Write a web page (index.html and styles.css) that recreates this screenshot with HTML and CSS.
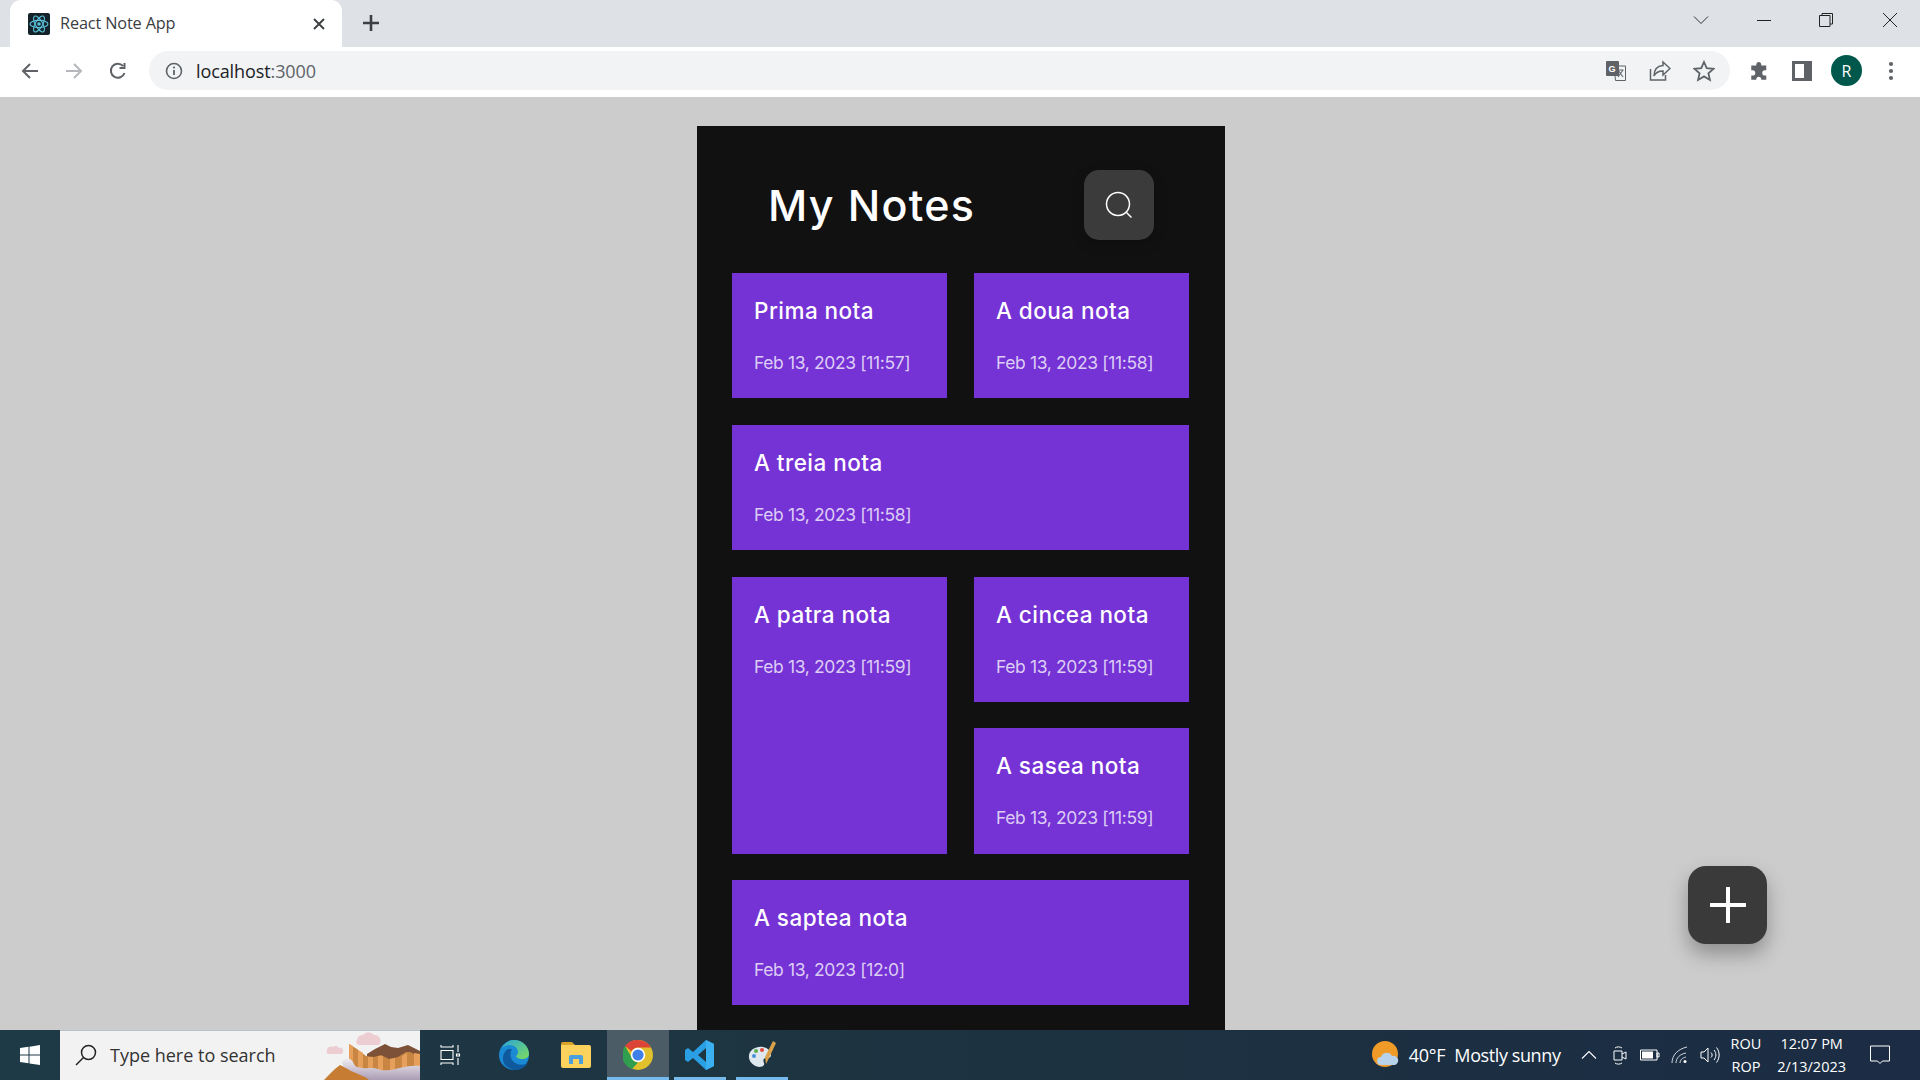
FILE: index.html
```html
<!DOCTYPE html>
<html lang="en">
<head>
<meta charset="utf-8">
<title>React Note App</title>
<link rel="stylesheet" href="styles.css">
</head>
<body>
<div class="window">
  <div class="tabstrip">
    <div class="tab">
      <svg class="favicon" viewBox="0 0 22 22"><rect width="22" height="22" rx="2" fill="#14232b"/><g fill="none" stroke="#5cc3dc" stroke-width="1.1"><ellipse cx="11" cy="11" rx="9" ry="3.6"/><ellipse cx="11" cy="11" rx="9" ry="3.6" transform="rotate(60 11 11)"/><ellipse cx="11" cy="11" rx="9" ry="3.6" transform="rotate(120 11 11)"/></g><circle cx="11" cy="11" r="1.8" fill="#5cc3dc"/></svg>
      <span class="tab-title">React Note App</span>
      <svg class="tab-close" viewBox="0 0 12 12"><path d="M1 1l10 10M11 1L1 11" stroke="#3c4043" stroke-width="1.9" fill="none"/></svg>
    </div>
    <svg class="new-tab" viewBox="0 0 18 18"><path d="M9 1v16M1 9h16" stroke="#3c4043" stroke-width="2.6" fill="none"/></svg>
    <div class="win-controls">
      <svg class="wc wc-chev" viewBox="0 0 16 16"><path d="M1 4.500l7 7 7-7" stroke="#333" stroke-width="1" fill="none"/></svg>
      <svg class="wc" viewBox="0 0 16 16"><path d="M1 8.500h14" stroke="#222" stroke-width="1" fill="none"/></svg>
      <svg class="wc wc-restore" viewBox="0 0 16 16"><path d="M1.500 3.500h10.500v11h-10.500zM4 3.500v-2h10.500v10.500h-2.500" stroke="#222" stroke-width="1" fill="none"/></svg>
      <svg class="wc" viewBox="0 0 16 16"><path d="M1 1l14 14M15 1L1 15" stroke="#222" stroke-width="1" fill="none"/></svg>
    </div>
  </div>
  <div class="toolbar">
    <svg class="tb-icon" viewBox="0 0 20 20"><path d="M18 10H3M10 3l-7 7 7 7" stroke="#5f6368" stroke-width="2" fill="none"/></svg>
    <svg class="tb-icon" viewBox="0 0 20 20"><path d="M2 10h15M10 3l7 7-7 7" stroke="#b4b7bb" stroke-width="2" fill="none"/></svg>
    <svg class="tb-icon" viewBox="0 0 20 20"><path d="M16.500 12a7 7 0 1 1-1.500-7M16.500 2v5h-5" stroke="#5f6368" stroke-width="2" fill="none"/></svg>
    <div class="omnibox">
      <svg class="info" viewBox="0 0 18 18"><circle cx="9" cy="9" r="7.500" stroke="#5f6368" stroke-width="1.600" fill="none"/><path d="M9 8v5" stroke="#5f6368" stroke-width="1.800"/><circle cx="9" cy="5.500" r="1.100" fill="#5f6368"/></svg>
      <span class="url">localhost<span class="url-port">:3000</span></span>
      <div class="omni-actions">
        <svg class="omni-icon" viewBox="0 0 22 22"><path d="M9 6h11.500v14.500h-10z" fill="#f1f3f4" stroke="#5f6368" stroke-width="1"/><rect x="1" y="1" width="13" height="15" rx="1" fill="#5f6368"/><text x="3.500" y="12" class="g-glyph">G</text><path d="M13 10l5 7M18 10l-5 7M12.500 10h6" stroke="#5f6368" stroke-width="1.100"/></svg>
        <svg class="omni-icon" viewBox="0 0 22 22"><path d="M1.500 9v11h15v-5" stroke="#5f6368" stroke-width="1.500" fill="none"/><path d="M14 2l7 6.500-7 6.500v-4c-4 0-7 1-9 5 0-6 3-10 9-10.500z" stroke="#5f6368" stroke-width="1.500" fill="none"/></svg>
        <svg class="omni-icon" viewBox="0 0 22 22"><path d="M11 2l2.700 6.200 6.800.6-5.100 4.500 1.500 6.600L11 16.400l-5.900 3.500 1.500-6.600L1.500 8.800l6.800-.6z" stroke="#5f6368" stroke-width="1.800" fill="none"/></svg>
      </div>
    </div>
    <div class="tb-right">
      <svg class="tb-icon" viewBox="0 0 22 22"><path d="M8 3.500a2.800 2.800 0 0 1 5.500 0V5H19v5.200h-1.500a2.900 2.900 0 0 0 0 5.800H19v4.500h-5.500v-1a2.800 2.800 0 0 0-5.500 0v1H2.500V16H4a2.900 2.900 0 0 0 0-5.800H2.500V5H8z" fill="#5f6368"/></svg>
      <svg class="tb-icon" viewBox="0 0 20 20"><path d="M0 0h20v20H0zM3 3v14h9V3z" fill="#5f6368" fill-rule="evenodd"/></svg>
      <div class="avatar">R</div>
      <svg class="tb-icon" viewBox="0 0 20 20"><circle cx="10" cy="3" r="2.100" fill="#5f6368"/><circle cx="10" cy="10" r="2.100" fill="#5f6368"/><circle cx="10" cy="17" r="2.100" fill="#5f6368"/></svg>
    </div>
  </div>
  <main class="viewport">
    <section class="app">
      <header class="app-header">
        <h1 class="app-title">My Notes</h1>
        <button class="search-btn" type="button">
          <svg viewBox="0 0 30 30" class="search-icon"><circle cx="14" cy="14" r="11.500" stroke="#fff" stroke-width="1.500" fill="none"/><path d="M22.500 22.500l5 5" stroke="#fff" stroke-width="1.500"/></svg>
        </button>
      </header>
      <div class="notes">
        <article class="note"><h2>Prima nota</h2><p>Feb 13, 2023 [11:57]</p></article>
        <article class="note"><h2>A doua nota</h2><p>Feb 13, 2023 [11:58]</p></article>
        <article class="note note-wide"><h2>A treia nota</h2><p>Feb 13, 2023 [11:58]</p></article>
        <article class="note note-tall"><h2>A patra nota</h2><p>Feb 13, 2023 [11:59]</p></article>
        <article class="note"><h2>A cincea nota</h2><p>Feb 13, 2023 [11:59]</p></article>
        <article class="note"><h2>A sasea nota</h2><p>Feb 13, 2023 [11:59]</p></article>
        <article class="note note-wide"><h2>A saptea nota</h2><p>Feb 13, 2023 [12:0]</p></article>
      </div>
    </section>
    <button class="fab" type="button">
      <svg viewBox="0 0 36 36" class="fab-icon"><path d="M18 1v34M1 18h34" stroke="#fff" stroke-width="4" stroke-linecap="round" fill="none"/></svg>
    </button>
  </main>
  <footer class="taskbar">
    <div class="start">
      <svg viewBox="0 0 20 20" class="start-icon"><path d="M0 3l8.500-1.200V9.500H0zM9.500 1.700L20 0v9.500H9.500zM0 10.500h8.500v7.700L0 17zM9.500 10.500H20V20L9.500 18.400z" fill="#fff"/></svg>
    </div>
    <div class="searchbox">
      <svg viewBox="0 0 22 22" class="sb-icon"><circle cx="13.500" cy="8.500" r="7" stroke="#222" stroke-width="1.500" fill="none"/><path d="M8.500 13.500L1 21" stroke="#222" stroke-width="1.500"/></svg>
      <span class="sb-text">Type here to search</span>
      <svg viewBox="0 0 100 50" class="sb-art">
        <defs><linearGradient id="lil" x1="0" y1="0" x2="0" y2="1"><stop offset="0" stop-color="#f2eef2"/><stop offset="1" stop-color="#a99cb4"/></linearGradient></defs>
        <path d="M37 10a6 6 0 0 1 6-5 7 7 0 0 1 11 0 6 6 0 0 1 5 10H39a3 3 0 0 1-2-5z" fill="#eccdd2"/>
        <path d="M7 20a4 4 0 0 1 6-3 4 4 0 0 1 6 1 3 3 0 0 1 2 6H8a3 3 0 0 1-1-4z" fill="#eccdd2"/>
        <path d="M47 24l8-5 10-5 6 3 7 1 10-3 12 6v10H47z" fill="#7d5138"/>
        <path d="M29 14l8 5 9 7 8 1 7-2 8 4 9-2 8-5 4 0 8 4v21H29z" fill="#c98643"/>
        <path d="M29 14l4 2v22h-4zM38 20l5 3v15h-5zM48 27l5 0v13h-5zM58 26l5 0v15h-5zM70 29l5 -1v12h-5zM82 26l5 -3v15h-5zM94 23l6 1v12h-6z" fill="#e7a05b"/>
        <path d="M22 32c2-4 7-5 9-2 3 2 3 6 6 7 12 3 12-1 24 3 12 2 24-6 39-4v14H38c-5-6-16-12-16-18z" fill="url(#lil)"/>
        <path d="M4 50c5-5 9-10 16-15 4 2 6 3 11 6 6 3 14 5 18 9z" fill="#c67c33"/>
      </svg>
    </div>
    <div class="tasks">
      <div class="task">
        <svg viewBox="0 0 22 22" class="task-icon task-view"><path d="M2 1v2h12V1M2 6.500h12v9H2zM2 21v-2h12v2M19 1v7M17.500 10h3v2h-3zM19 14v7" stroke="#fff" stroke-width="1.100" fill="none"/></svg>
      </div>
      <div class="task">
        <svg viewBox="0 0 30 30" class="task-icon-lg"><defs><linearGradient id="e1" x1="0" y1="0" x2="1" y2="1"><stop offset="0" stop-color="#2aa6d8"/><stop offset="1" stop-color="#7edb5a"/></linearGradient></defs><circle cx="15" cy="15" r="15" fill="#1a8ad4"/><path d="M9 9c-5 3-7 10-3 16 3 3 7 5 11 5 5 0 9-3 12-7-5 3-13 2-16-3-2-3-2-8 0-11z" fill="#0f5a9e"/><path d="M3 8C6 2 11 0 15 0c8 0 15 6 15 14 0 3-3 5-7 5-3 0-6-1-6-3 1-1 2-2 2-4 0-4-4-7-8-7-3 0-6 1-8 3z" fill="url(#e1)"/></svg>
      </div>
      <div class="task">
        <svg viewBox="0 0 30 26" class="task-icon-lg"><path d="M0 2a2 2 0 0 1 2-2h9l3 3h-14z" fill="#d9a42a"/><path d="M0 3h28a2 2 0 0 1 2 2v19a2 2 0 0 1-2 2H2a2 2 0 0 1-2-2z" fill="#fbd35c"/><path d="M8 22v-7a2 2 0 0 1 2-2h10a2 2 0 0 1 2 2v7h-4v-5h-6v5z" fill="#4a9fdc"/></svg>
      </div>
      <div class="task task-active task-open">
        <svg viewBox="0 0 30 30" class="task-icon-xl"><circle cx="15" cy="15" r="15" fill="#e0c12c"/><path d="M15 0a15 15 0 0 1 13 7.500H15a7.500 7.500 0 0 0-6.500 3.750L2 6A15 15 0 0 1 15 0z" fill="#db4437"/><path d="M2 6l6.500 11.250A7.500 7.500 0 0 0 15 22.500L9 29A15 15 0 0 1 2 6z" fill="#2f9e4f"/><circle cx="15" cy="15" r="7.200" fill="#fff"/><circle cx="15" cy="15" r="5.600" fill="#3f7fe8"/></svg>
      </div>
      <div class="task task-open">
        <svg viewBox="0 0 30 30" class="task-icon-lg"><path d="M21 0l8 4v22l-8 4-13-12-5 4-3-2v-10l3-2 5 4zM21 8l-8 7 8 7z" fill="#2a9fe4" fill-rule="evenodd"/><path d="M21 0l8 4v22l-8 4z" fill="#3bb0f0"/></svg>
      </div>
      <div class="task task-open">
        <svg viewBox="0 0 30 30" class="task-icon-lg"><path d="M2 18C1 10 9 6 16 7c5 1 8 4 8 8 0 3-3 3-5 3-3 0-3 3-2 5 1 3-2 4-5 4-5-1-9-4-10-9z" fill="#dfe8ee"/><circle cx="7" cy="16" r="2" fill="#4a90d9"/><circle cx="9" cy="11" r="2" fill="#5bb04c"/><circle cx="15" cy="10" r="2" fill="#e04a3c"/><path d="M26 1l3 2-7 15-3 6-1-7z" fill="#d9a24a"/></svg>
      </div>
    </div>
    <div class="tray">
      <svg viewBox="0 0 28 28" class="weather"><circle cx="13" cy="13" r="13" fill="#f09a27"/><path d="M9 24a4 4 0 0 1 0-8 6 6 0 0 1 11-1 4.500 4.500 0 0 1 3 9z" fill="#b9d2ec"/></svg>
      <span class="weather-text">40°F</span>
      <span class="weather-text weather-desc">Mostly sunny</span>
      <svg viewBox="0 0 16 10" class="ti ti-chev"><path d="M1 8.500l7-7 7 7" stroke="#fff" stroke-width="1.100" fill="none"/></svg>
      <svg viewBox="0 0 16 20" class="ti ti-meet"><path d="M2 6h8v9H2zM10 9l4-2v7l-4-2M3 3c2-1.500 5-1.500 7 0M3 18c2 1.500 5 1.500 7 0" stroke="#fff" stroke-width="1" fill="none"/></svg>
      <svg viewBox="0 0 20 12" class="ti ti-batt"><path d="M.5 1h16.500v10H.5zM17 4h2v4h-2z" stroke="#fff" stroke-width="1" fill="none"/><rect x="2" y="2.500" width="11" height="7" fill="#fff"/></svg>
      <svg viewBox="0 0 18 18" class="ti ti-wifi"><path d="M1 17C1 9 7 3 16 1M5 17c0-5 4-9 10-10M9 17c0-3 2-5 6-6" stroke="#cfd6dd" stroke-width="1" fill="none"/><circle cx="14" cy="15.500" r="1.500" fill="#fff"/></svg>
      <svg viewBox="0 0 20 18" class="ti ti-sound"><path d="M1 6h3l4-4v14l-4-4H1zM11 6.500c1.500 1.500 1.500 3.500 0 5M14 4c2.500 3 2.500 7 0 10M16.500 1.500c3.500 4.500 3.500 10.500 0 15" stroke="#fff" stroke-width="1" fill="none"/></svg>
      <div class="lang"><span>ROU</span><span>ROP</span></div>
      <div class="clock"><span>12:07 PM</span><span>2/13/2023</span></div>
      <svg viewBox="0 0 20 20" class="ti ti-notif"><path d="M.5 1h19v15h-7l-2.500 2.500L7.500 16h-7z" stroke="#fff" stroke-width="1" fill="none"/></svg>
    </div>
  </footer>
</div>
</body>
</html>
```

FILE: styles.css
```css
* { box-sizing: border-box; }
html, body { margin: 0; height: 100%; overflow: hidden; }
body { font-family: "Open Sans", "Liberation Sans", sans-serif; background: #ccc; }
.window { width: 1920px; height: 1080px; display: flex; flex-direction: column; }

.tabstrip { height: 47px; background: #dee1e6; display: flex; align-items: flex-start; padding-left: 10px; flex: none; }
.tab { width: 332px; height: 47px; background: #fff; border-radius: 11px 11px 0 0; display: flex; align-items: center; padding: 0 16px 0 18px; }
.favicon { width: 22px; height: 22px; flex: none; }
.tab-title { font-size: 16.3px; color: #3c4043; margin-left: 10px; flex: 1; letter-spacing: -0.15px; padding-bottom: 2px; }
.tab-close { width: 12px; height: 12px; margin-right: 1px; }
.new-tab { width: 18px; height: 18px; margin: 14px 0 0 20px; }
.win-controls { margin-left: auto; display: flex; align-items: center; height: 40px; padding-right: 22px; gap: 47px; }
.wc { width: 16px; height: 16px; }
.wc-restore { margin-left: -1px; margin-right: 1px; }

.toolbar { height: 50px; background: #fff; display: flex; align-items: center; padding: 0 0 3px 20px; flex: none; gap: 24px; }
.tb-icon { width: 20px; height: 20px; flex: none; }
.omnibox { width: 1581px; height: 39px; margin-left: -3px; background: #f1f3f4; border-radius: 20px; display: flex; align-items: center; padding: 0 15px 0 16px; flex: none; }
.info { width: 18px; height: 18px; }
.url { font-size: 18px; color: #202124; margin-left: 13px; letter-spacing: -0.1px; }
.url-port { color: #5f6368; }
.omni-actions { margin-left: auto; display: flex; gap: 22px; }
.omni-icon { width: 22px; height: 22px; }
.g-glyph { font-family: "Liberation Sans", sans-serif; font-size: 9px; font-weight: 700; fill: #fff; }
.tb-right { display: flex; align-items: center; margin-left: -5px; gap: 23px; }
.avatar { width: 31px; height: 31px; border-radius: 50%; background: #00574b; color: #fff; font-size: 16px; display: flex; align-items: center; justify-content: center; margin: 0 -4px; }

.viewport { flex: 1; min-height: 0; position: relative; overflow: hidden; display: flex; justify-content: center; background: #ccc; padding-left: 2px; }
.app { width: 528px; margin-top: 29px; background: #111; padding: 44px 36px 40px 35px; height: 930px; flex: none; font-family: Inter, "Liberation Sans", sans-serif; }
.app-header { display: flex; align-items: center; justify-content: space-between; padding: 0 35px 0 36px; margin-bottom: 33px; }
.app-title { margin: 0; color: #fff; font-size: 43px; font-weight: 500; letter-spacing: 1.3px; }
.search-btn { width: 70px; height: 70px; border: 0; border-radius: 15px; background: #3b3b3b; display: flex; align-items: center; justify-content: center; padding: 0; box-shadow: 0 4px 14px rgba(0,0,0,.2); }
.search-icon { width: 30px; height: 30px; }
.notes { display: grid; grid-template-columns: 215px 215px; grid-auto-rows: 125.25px; column-gap: 27px; row-gap: 26.5px; }
.note { background: #7532d4; padding: 24px 22px; color: #fff; }
.note-wide { grid-column: span 2; }
.note-tall { grid-row: span 2; }
.note h2 { margin: 0; font-size: 22.5px; font-weight: 500; line-height: 28px; letter-spacing: 0.45px; }
.note p { margin: 26px 0 0; font-size: 17.5px; font-weight: 400; line-height: 24px; color: #dccdf5; letter-spacing: -0.37px; }
.fab { position: absolute; right: 153px; bottom: 86px; width: 79px; height: 78px; border: 0; padding: 0; border-radius: 18px; background: #3a3a3a; display: flex; align-items: center; justify-content: center; box-shadow: 0 10px 20px rgba(0,0,0,.3); }
.fab-icon { width: 36px; height: 36px; }

.taskbar { height: 50px; flex: none; display: flex; align-items: stretch; background: linear-gradient(90deg, #1f3a47 0%, #1d3340 45%, #1b2c44 100%); color: #fff; position: relative; z-index: 2; }
.start { width: 60px; display: flex; align-items: center; justify-content: center; }
.start-icon { width: 20px; height: 20px; }
.searchbox { width: 360px; background: #f2f2f2; display: flex; align-items: center; padding: 0 0 2px 15px; border-top: 1px solid #b9c2c8; position: relative; overflow: hidden; }
.sb-icon { width: 22px; height: 22px; }
.sb-text { color: #333; font-size: 18px; margin-left: 13px; }
.sb-art { position: absolute; right: 0; bottom: 0; width: 100px; height: 50px; }
.tasks { display: flex; margin-left: 1px; }
.task { width: 62px; display: flex; align-items: center; justify-content: center; position: relative; }
.task-open::after { content: ""; position: absolute; left: 5px; right: 5px; bottom: 0; height: 3px; background: #76b9ed; }
.task-active { background-color: #4b5c66; }
.task-active::after { left: 0; right: 0; }
.task-icon { width: 22px; height: 22px; }
.task-view { margin-right: 5px; }
.task-icon-lg { width: 30px; height: 30px; }
.task-icon-xl { width: 30px; height: 30px; }
.tray { margin-left: auto; display: flex; align-items: center; padding-right: 30px; }
.weather { width: 28px; height: 28px; margin-right: 9px; }
.weather-text { font-size: 18px; color: #fff; letter-spacing: -0.25px; }
.weather-desc { margin-left: 9px; letter-spacing: -0.4px; }
.ti { flex: none; }
.ti-chev { width: 16px; height: 10px; margin-left: 20px; }
.ti-meet { width: 16px; height: 20px; margin-left: 15px; }
.ti-batt { width: 20px; height: 12px; margin-left: 12px; }
.ti-wifi { width: 18px; height: 18px; margin-left: 11px; }
.ti-sound { width: 20px; height: 18px; margin-left: 11px; }
.lang, .clock { display: flex; flex-direction: column; font-size: 14.5px; line-height: 23px; align-items: center; color: #fff; }
.lang { margin-left: 11px; }
.clock { margin-left: 16px; }
.ti-notif { width: 20px; height: 20px; margin-left: 24px; }
```
